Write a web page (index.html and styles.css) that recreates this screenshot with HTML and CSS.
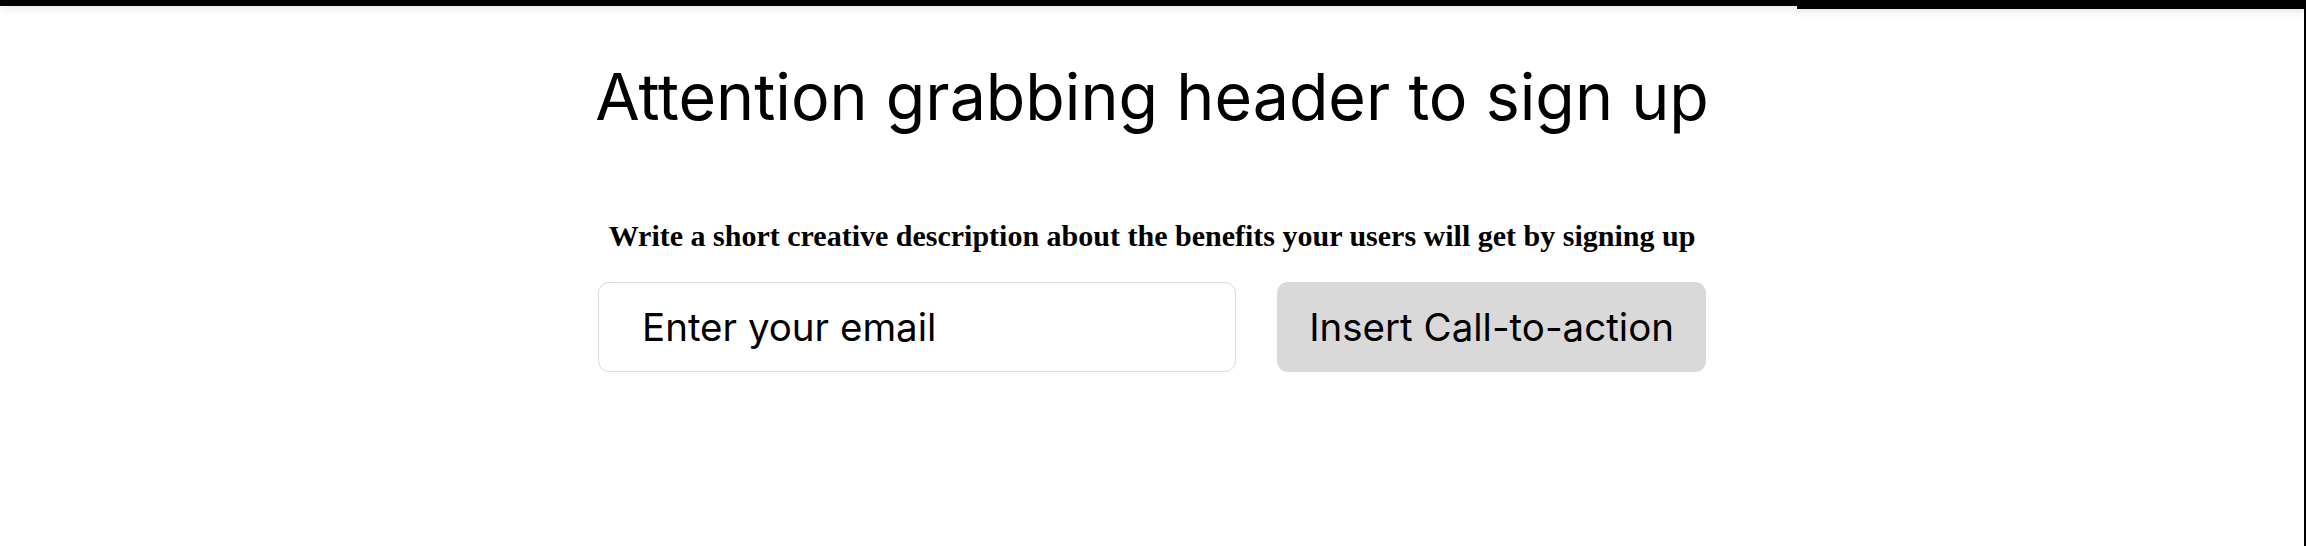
FILE: index.html
```html
<!DOCTYPE html>
<html>
<head>
<meta charset="utf-8">
<link rel="stylesheet" href="styles.css">
</head>
<body>
<div class="strip">
  <div class="strip-a"></div>
  <div class="strip-b"></div>
</div>
<main class="page">
  <section class="signup">
    <h1 class="title">Attention grabbing header to sign up</h1>
    <p class="desc">Write a short creative description about the benefits your users will get by signing up</p>
    <form class="form">
      <input class="email" type="email" placeholder="Enter your email">
      <button class="cta" type="button">Insert Call-to-action</button>
    </form>
  </section>
</main>
</body>
</html>
```
FILE: styles.css
```css
html, body {
  margin: 0;
  padding: 0;
  background: #fff;
}
body {
  width: 2306px;
  height: 546px;
  overflow: hidden;
}
.strip {
  display: flex;
  align-items: flex-start;
  height: 9px;
}
.strip-a {
  width: 1797px;
  height: 6px;
  background: #000;
  box-shadow: 0 2px 8px rgba(0,0,0,0.12);
}
.strip-b {
  flex: 1;
  height: 9px;
  background: #000;
  box-shadow: 0 2px 8px rgba(0,0,0,0.12);
}
.page {
  height: 537px;
  border-right: 2px solid #000;
  box-sizing: border-box;
  display: flex;
  justify-content: center;
}
.signup {
  width: 1108px;
  display: flex;
  flex-direction: column;
  align-items: center;
}
.title {
  font-family: Inter, "Liberation Sans", sans-serif;
  font-weight: 400;
  font-size: 64.5px;
  line-height: 80px;
  margin: 48px 0 0;
  color: #000;
  white-space: nowrap;
}
.desc {
  font-family: "Liberation Serif", serif;
  font-weight: 700;
  font-size: 30px;
  line-height: 36px;
  margin: 81px 0 0;
  color: #000;
  white-space: nowrap;
}
.form {
  display: flex;
  gap: 41px;
  width: 100%;
  margin-top: 28px;
}
.email {
  flex: 1;
  min-width: 0;
  height: 90px;
  box-sizing: border-box;
  border: 1.5px solid #dcdcdc;
  border-radius: 11px;
  padding: 0 43px;
  font-family: Inter, "Liberation Sans", sans-serif;
  font-size: 38.5px;
  color: #000;
  background: #fff;
  outline: none;
}
.email::placeholder {
  color: #000;
  opacity: 1;
}
.cta {
  height: 90px;
  padding: 0 32px;
  border: none;
  border-radius: 11px;
  background: #d9d9d9;
  font-family: Inter, "Liberation Sans", sans-serif;
  font-size: 38.5px;
  color: #000;
  white-space: nowrap;
}
```
